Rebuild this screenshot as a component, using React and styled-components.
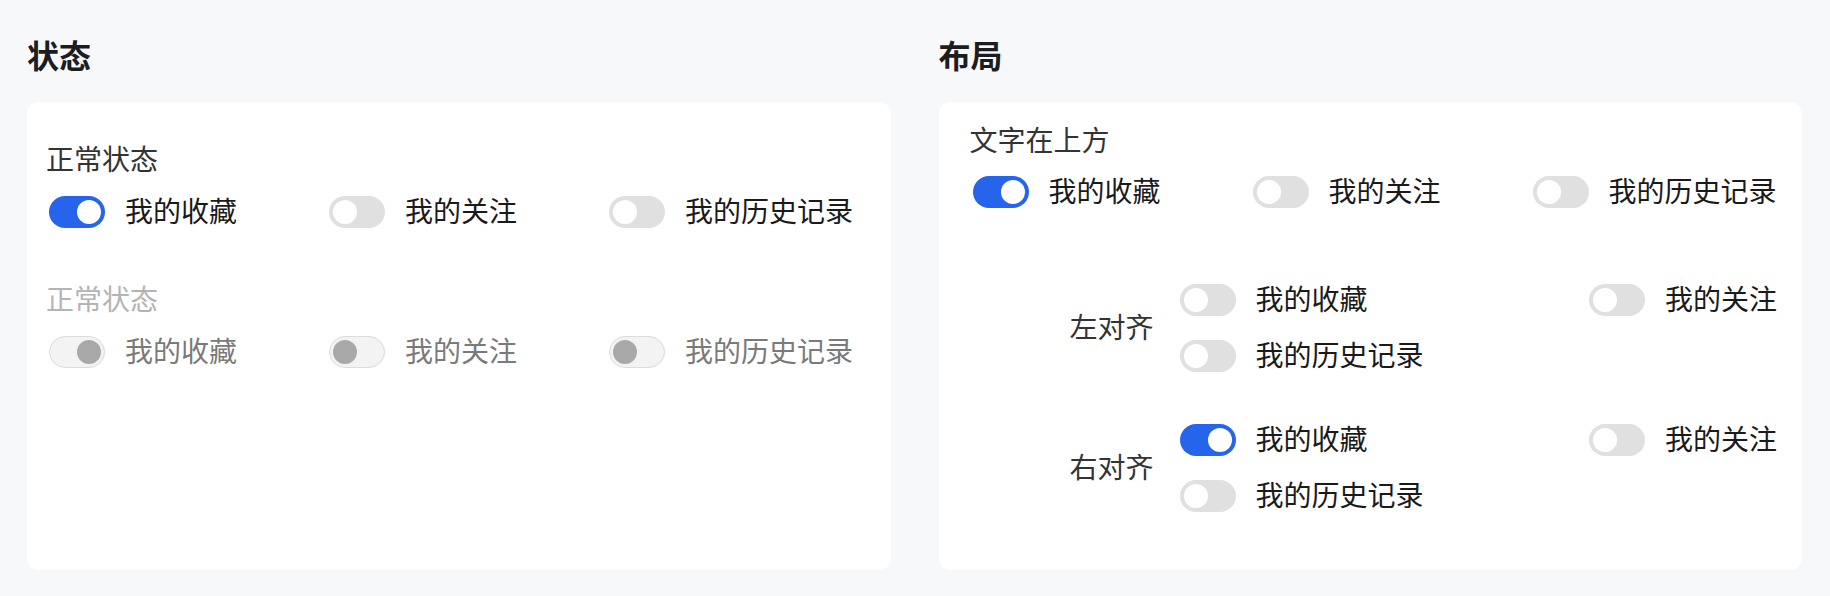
import React, { useState } from "react";
import styled, { createGlobalStyle } from "styled-components";

const GlobalStyle = createGlobalStyle`
  html, body {
    margin: 0;
    padding: 0;
    background: #f7f8fa;
  }
  body {
    font-family: "Noto Sans CJK SC", "Noto Sans", sans-serif;
    color: #1a1a1a;
  }
`;

const Page = styled.div`
  display: grid;
  grid-template-columns: minmax(0, 1fr) minmax(0, 1fr);
  column-gap: 48px;
  padding: 34px 28px 26px 27px;
  background: #f7f8fa;
  box-sizing: border-box;
  width: 1830px;
  height: 596px;
`;

const Section = styled.section`
  display: flex;
  flex-direction: column;
  min-width: 0;
`;

const Title = styled.h2`
  margin: 0 0 24px;
  font-size: 32px;
  line-height: 40px;
  padding-bottom: 4px;
  font-weight: 700;
  color: #1d1d1f;
`;

const Card = styled.div`
  background: #fff;
  border-radius: 12px;
  height: 468px;
  box-sizing: border-box;
  padding: ${(p) => p.$pad};
`;

// text boxes are 40px tall, glyphs sit 2px above centre like the reference
const GroupLabel = styled.div`
  font-size: 28px;
  line-height: 36px;
  padding-bottom: 4px;
  color: ${(p) => (p.$disabled ? "#b4b4b4" : "#333")};
`;

const Group = styled.div`
  margin-top: ${(p) => p.$top || 0}px;
`;

const Row = styled.div`
  display: grid;
  grid-template-columns: 280px 280px auto;
  margin-top: ${(p) => p.$top || 0}px;
`;

const Item = styled.label`
  display: flex;
  align-items: center;
  gap: 20px;
  height: 40px;
  font-size: 28px;
  white-space: nowrap;
  color: ${(p) => (p.$disabled ? "#7a7a7a" : "#1a1a1a")};
  cursor: ${(p) => (p.$disabled ? "not-allowed" : "pointer")};
`;

const ItemText = styled.span`
  line-height: 36px;
  padding-bottom: 4px;
`;

const Track = styled.span`
  display: flex;
  align-items: center;
  justify-content: ${(p) => (p.$on ? "flex-end" : "flex-start")};
  flex: none;
  width: 56px;
  height: 32px;
  margin-left: 3px;
  padding: ${(p) => (p.$disabled ? 3 : 4)}px;
  box-sizing: border-box;
  border-radius: 16px;
  background: ${(p) => (p.$disabled ? "#f3f3f3" : p.$on ? "#2665eb" : "#e1e0e1")};
  border: ${(p) => (p.$disabled ? "1px solid #dcdcdc" : "none")};
`;

const Knob = styled.span`
  width: 24px;
  height: 24px;
  border-radius: 50%;
  background: ${(p) => (p.$disabled ? "#a8a8a8" : "#fff")};
`;

const FormItem = styled.div`
  display: flex;
  align-items: center;
  gap: 23px;
  margin-top: ${(p) => p.$top || 0}px;
`;

const SideLabel = styled.div`
  flex: none;
  width: 184px;
  text-align: right;
  font-size: 28px;
  line-height: 36px;
  padding-bottom: 4px;
  color: #333;
`;

const Controls = styled.div`
  flex: 1;
  min-width: 0;
  display: flex;
  flex-wrap: wrap;
  justify-content: space-between;
  row-gap: 16px;
`;

function Switch({ label, defaultOn = false, disabled = false }) {
  const [on, setOn] = useState(defaultOn);
  return (
    <Item $disabled={disabled} onClick={() => !disabled && setOn(!on)}>
      <Track $on={on} $disabled={disabled} role="switch" aria-checked={on}>
        <Knob $disabled={disabled} />
      </Track>
      <ItemText>{label}</ItemText>
    </Item>
  );
}

const labels = ["我的收藏", "我的关注", "我的历史记录"];

function SwitchRow({ firstOn, disabled, top }) {
  return (
    <Row $top={top}>
      {labels.map((l, i) => (
        <Switch key={l} label={l} defaultOn={firstOn && i === 0} disabled={disabled} />
      ))}
    </Row>
  );
}

function AlignBlock({ title, firstOn, top }) {
  return (
    <FormItem $top={top}>
      <SideLabel>{title}</SideLabel>
      <Controls>
        {labels.map((l, i) => (
          <Switch key={l} label={l} defaultOn={firstOn && i === 0} />
        ))}
      </Controls>
    </FormItem>
  );
}

export default function App() {
  return (
    <>
      <GlobalStyle />
      <Page>
        <Section>
          <Title>状态</Title>
          <Card $pad="38px 20px 0 19px">
            <Group>
              <GroupLabel>正常状态</GroupLabel>
              <SwitchRow firstOn top={12} />
            </Group>
            <Group $top={48}>
              <GroupLabel $disabled>正常状态</GroupLabel>
              <SwitchRow firstOn disabled top={12} />
            </Group>
          </Card>
        </Section>
        <Section>
          <Title>布局</Title>
          <Card $pad="19px 25px 0 31px">
            <GroupLabel>文字在上方</GroupLabel>
            <SwitchRow firstOn top={11} />
            <AlignBlock title="左对齐" top={68} />
            <AlignBlock title="右对齐" firstOn top={44} />
          </Card>
        </Section>
      </Page>
    </>
  );
}
